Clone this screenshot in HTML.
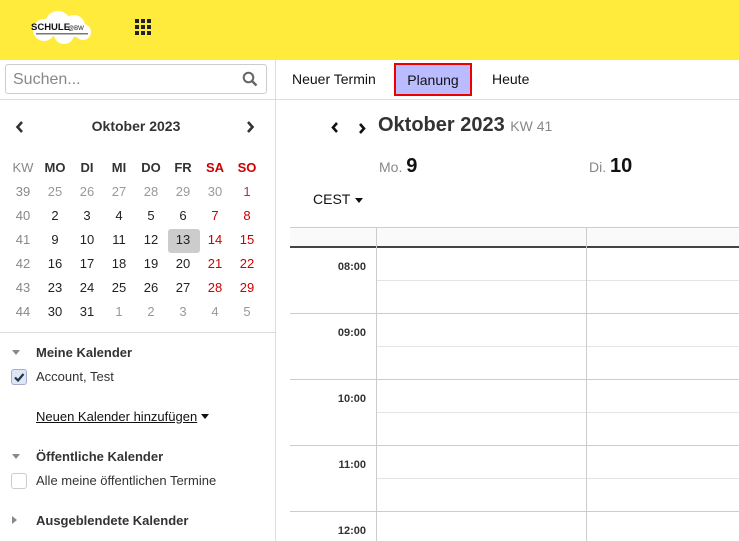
<!DOCTYPE html>
<html style="overflow:hidden;width:739px;height:541px"><head><meta charset="utf-8"><style>
*{box-sizing:border-box;margin:0;padding:0}
body{width:739px;height:541px;overflow:hidden;font-family:"Liberation Sans",sans-serif;background:#fff;color:#222;position:relative}
.abs{position:absolute}
.hdr{left:0;top:0;width:739px;height:60px;background:#ffeb3b}
.side{left:0;top:60px;width:276px;height:481px;border-right:1px solid #ddd}
.search{left:5px;top:64px;width:262px;height:30px;border:1px solid #ccc;border-radius:3px;font-size:16px;color:#888;padding:6px 0 0 7px}
.d{position:absolute;width:32px;text-align:center;font-size:13px;line-height:24px}
</style></head><body>
<div class="abs hdr"></div>
<svg class="abs" style="left:28px;top:10px" width="66" height="34" viewBox="0 0 66 34"><g fill="#fff"><circle cx="16" cy="20" r="11"/><circle cx="30" cy="14" r="13"/><circle cx="46" cy="16" r="11"/><circle cx="55" cy="22" r="8"/><circle cx="36" cy="24" r="10"/></g><text x="3" y="20" font-family="Liberation Sans" font-weight="bold" font-size="9.5" fill="#111">SCHULE</text><text x="40" y="20" font-family="Liberation Sans" font-size="6" fill="#111">@BW</text><rect x="8" y="23" width="52" height="1.5" fill="#777"/></svg>
<svg class="abs" style="left:135px;top:19px" width="17" height="17"><g fill="#222"><rect x="0" y="0" width="4" height="4"/><rect x="6" y="0" width="4" height="4"/><rect x="12" y="0" width="4" height="4"/><rect x="0" y="6" width="4" height="4"/><rect x="6" y="6" width="4" height="4"/><rect x="12" y="6" width="4" height="4"/><rect x="0" y="12" width="4" height="4"/><rect x="6" y="12" width="4" height="4"/><rect x="12" y="12" width="4" height="4"/></g></svg>
<div class="abs side"></div>
<div class="abs search">Suchen...</div>
<svg class="abs" style="left:242px;top:71px" width="16" height="16"><circle cx="6.5" cy="6.5" r="4.8" fill="none" stroke="#666" stroke-width="2"/><line x1="10" y1="10" x2="14.5" y2="14.5" stroke="#666" stroke-width="2.4"/></svg>
<div class="abs" style="left:0;top:99px;width:276px;height:1px;background:#ddd"></div>
<svg class="abs" style="left:15px;top:120px" width="10" height="14"><path d="M7 2 L2.5 7 L7 12" fill="none" stroke="#333" stroke-width="2.6"/></svg>
<svg class="abs" style="left:245px;top:120px" width="10" height="14"><path d="M3 2 L7.5 7 L3 12" fill="none" stroke="#333" stroke-width="2.6"/></svg>
<div class="abs" style="left:0;top:118px;width:272px;text-align:center;font-weight:bold;font-size:14px;color:#333">Oktober 2023</div>
<div class="abs" style="left:168px;top:229px;width:32px;height:24px;background:#ccc;border-radius:3px"></div>
<div id="cal"></div>
<div class="abs" style="left:0;top:332px;width:276px;height:1px;background:#ddd"></div>
<svg class="abs" style="left:12px;top:350px" width="8" height="6"><path d="M0 0H8L4 5Z" fill="#888"/></svg>
<div class="abs" style="left:36px;top:345px;font-weight:bold;font-size:13px;color:#333">Meine Kalender</div>
<div class="abs" style="left:11px;top:369px;width:16px;height:16px;border:1px solid #aac;border-radius:3px;background:#dde6f5"></div>
<svg class="abs" style="left:13px;top:371px" width="12" height="12"><path d="M2 6.5 L5 9.5 L10.5 3" fill="none" stroke="#234" stroke-width="2.2"/></svg>
<div class="abs" style="left:36px;top:369px;font-size:13px;color:#333">Account, Test</div>
<div class="abs" style="left:36px;top:409px;font-size:13px;color:#111;text-decoration:underline">Neuen Kalender hinzufügen</div>
<svg class="abs" style="left:201px;top:414px" width="8" height="5"><path d="M0 0H8L4 5Z" fill="#111"/></svg>
<svg class="abs" style="left:12px;top:454px" width="8" height="6"><path d="M0 0H8L4 5Z" fill="#888"/></svg>
<div class="abs" style="left:36px;top:449px;font-weight:bold;font-size:13px;color:#333">Öffentliche Kalender</div>
<div class="abs" style="left:11px;top:473px;width:16px;height:16px;border:1px solid #ccc;border-radius:3px"></div>
<div class="abs" style="left:36px;top:473px;font-size:13px;color:#333">Alle meine öffentlichen Termine</div>
<svg class="abs" style="left:12px;top:516px" width="6" height="9"><path d="M0 0V8L5 4Z" fill="#888"/></svg>
<div class="abs" style="left:36px;top:513px;font-weight:bold;font-size:13px;color:#333">Ausgeblendete Kalender</div>

<div class="abs" style="left:292px;top:71px;font-size:14px;color:#111">Neuer Termin</div>
<div class="abs" style="left:394px;top:63px;width:78px;height:33px;border:2px solid #e00;background:#bbf;font-size:14px;color:#111;text-align:center;padding-top:7px">Planung</div>
<div class="abs" style="left:492px;top:71px;font-size:14px;color:#111">Heute</div>
<div class="abs" style="left:276px;top:99px;width:463px;height:1px;background:#ddd"></div>
<svg class="abs" style="left:330px;top:121px" width="10" height="13"><path d="M7 2 L3 6.5 L7 11" fill="none" stroke="#111" stroke-width="2.6"/></svg>
<svg class="abs" style="left:357px;top:122px" width="10" height="13"><path d="M3 2 L7 6.5 L3 11" fill="none" stroke="#111" stroke-width="2.6"/></svg>
<div class="abs" style="left:378px;top:114px;font-size:20px;font-weight:bold;color:#333">Oktober 2023 <span style="font-size:14px;font-weight:normal;color:#888">KW 41</span></div>
<div class="abs" style="left:379px;top:155px;font-size:14px;color:#888">Mo. <span style="font-size:20px;font-weight:bold;color:#111">9</span></div>
<div class="abs" style="left:589px;top:155px;font-size:14px;color:#888">Di. <span style="font-size:20px;font-weight:bold;color:#111">10</span></div>
<div class="abs" style="left:313px;top:191px;font-size:14px;color:#111">CEST</div>
<svg class="abs" style="left:355px;top:198px" width="8" height="5"><path d="M0 0H8L4 5Z" fill="#111"/></svg>
<div class="abs" style="left:290px;top:227px;width:449px;height:20px;border-top:1px solid #ccc;background:#fafafa"></div>
<div class="abs" style="left:290px;top:246px;width:449px;height:2px;background:#444"></div>
<div id="grid"></div>
<div class="abs" style="left:376px;top:227px;width:1px;height:314px;background:#ccc"></div>
<div class="abs" style="left:586px;top:227px;width:1px;height:314px;background:#ccc"></div>
<script>
var c=document.getElementById('cal'),h='';
var rows=[["KW","MO","DI","MI","DO","FR","SA","SO"],["39","25","26","27","28","29","30","1"],["40","2","3","4","5","6","7","8"],["41","9","10","11","12","13","14","15"],["42","16","17","18","19","20","21","22"],["43","23","24","25","26","27","28","29"],["44","30","31","1","2","3","4","5"]];
rows.forEach(function(r,i){r.forEach(function(v,j){var col='#222',fw='normal';
if(j==0)col='#888';else if(i==0){fw='bold';col=j>=6?'#c00':'#333';}
else if(i==1||(i==6&&j>=3))col='#999';
else if(j>=6)col='#c00';
if(i==1&&j==7)col='#a03070';
h+='<div class="d" style="left:'+(7+32*j)+'px;top:'+(156+24*i)+'px;color:'+col+';font-weight:'+fw+'">'+v+'</div>';});});
c.innerHTML=h;
var g='';
for(var k=0;k<5;k++){var t=247+66*k;
g+='<div class="abs" style="left:290px;top:'+(t+14)+'px;width:76px;text-align:right;font-size:11px;font-weight:bold;color:#333">'+('0'+(8+k)).slice(-2)+':00</div>';
if(k<4){g+='<div class="abs" style="left:376px;top:'+(t+33)+'px;width:363px;height:1px;background:#e4e4e4"></div>';
g+='<div class="abs" style="left:290px;top:'+(t+66)+'px;width:449px;height:1px;background:#ccc"></div>';}}
document.getElementById('grid').innerHTML=g;
</script>
</body></html>
